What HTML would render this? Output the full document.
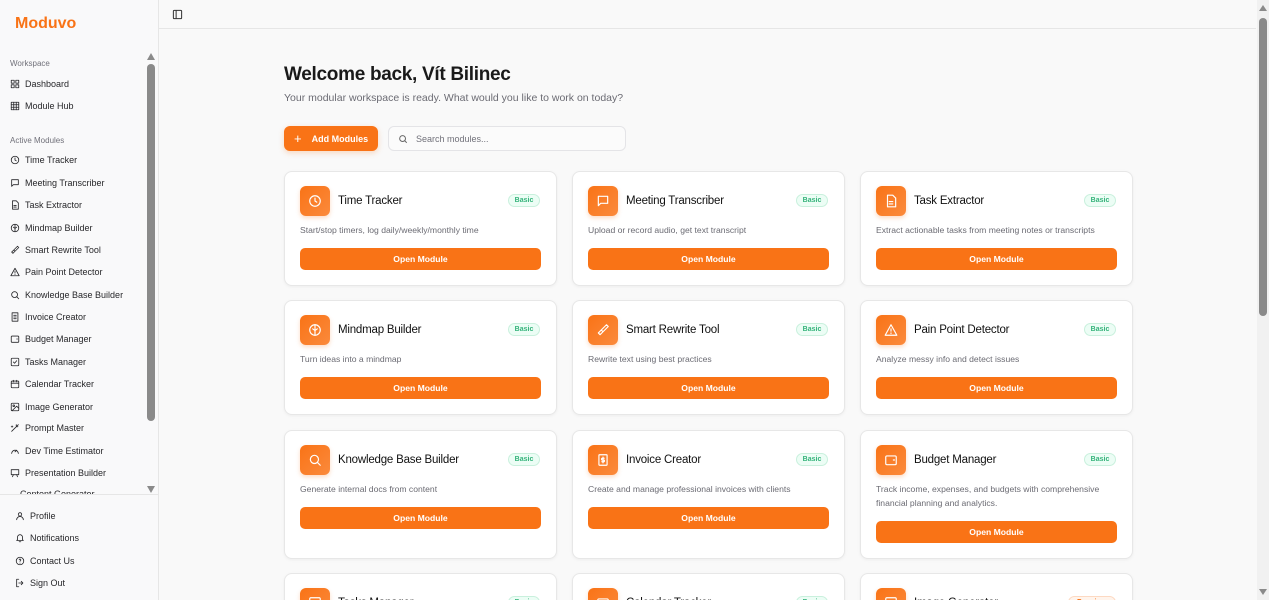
<!DOCTYPE html>
<html><head><meta charset="utf-8"><style>
*{box-sizing:border-box;margin:0;padding:0}
html{width:1269px;height:600px;overflow:hidden}
body{width:1269px;height:600px;overflow:hidden;background:#f9f9f9;font-family:"Liberation Sans",sans-serif;color:#1a1a1a;position:relative}
.sb{position:absolute;left:0;top:0;width:159px;height:600px;background:#f9f9fa;border-right:1px solid #e6e6e6}
.logo{position:absolute;left:15px;top:15px;color:#f97316;font-size:16px;font-weight:600}
.lbl{position:absolute;left:10px;font-size:8px;color:#71717a}
.it{position:absolute;left:10px;font-size:9px;color:#27272a;display:flex;align-items:center;gap:5px;height:12px}
.it svg{width:10px;height:10px;stroke:#27272a;fill:none;stroke-width:2;stroke-linecap:round;stroke-linejoin:round}
.sbs{position:absolute;left:147px;top:64px;width:8px;height:357px;background:#8a8a8a;border-radius:4px}
.tri{position:absolute;left:147px;width:0;height:0;border-left:4px solid transparent;border-right:4px solid transparent}
.bot{position:absolute;left:0;top:494px;width:158px;height:106px;border-top:1px solid #e6e6e6;background:#f9f9fa}
.top{position:absolute;left:159px;top:0;width:1097px;height:29px;border-bottom:1px solid #e6e6e6}
.msb{position:absolute;left:1257px;top:0;width:12px;height:600px;background:#f1f1f1}
h1{position:absolute;left:284px;top:64px;font-size:19px;font-weight:700;letter-spacing:-.3px}
.sub{position:absolute;left:284px;top:92px;font-size:10.5px;color:#6b6b73}
.add{position:absolute;left:284px;top:126px;width:94px;height:25px;background:#f97316;border-radius:6px;color:#fff;font-size:9px;font-weight:700;display:flex;align-items:center;gap:10px;padding-left:10px;box-shadow:0 2px 6px rgba(249,115,22,.25)}
.srch{position:absolute;left:388px;top:126px;width:238px;height:25px;border:1px solid #e4e4e7;border-radius:6px;background:#fbfbfb;font-size:9px;color:#71717a;display:flex;align-items:center;gap:8px;padding-left:9px}
.card{position:absolute;width:273px;height:115px;background:#fff;border:1px solid #e7e7e7;border-radius:8px;box-shadow:0 1px 3px rgba(0,0,0,.05)}
.ic{position:absolute;left:15px;top:14px;width:30px;height:30px;border-radius:6px;background:linear-gradient(135deg,#f97316,#fb8a3c);display:flex;align-items:center;justify-content:center;box-shadow:0 2px 4px rgba(249,115,22,.25)}
.ic svg{width:14px;height:14px;stroke:#fff;fill:none;stroke-width:2;stroke-linecap:round;stroke-linejoin:round}
.t{position:absolute;left:53px;top:23px;font-size:11.5px;color:#111;letter-spacing:-.2px}
.b{position:absolute;right:16px;top:22px;height:13px;width:32px;border-radius:7px;background:#ecfdf5;border:1px solid #c9f0dd;color:#34b37a;font-size:7px;font-weight:700;display:flex;align-items:center;justify-content:center}
.d{position:absolute;left:15px;top:51px;font-size:8.6px;color:#6b6b73;line-height:14px;width:245px}
.o{position:absolute;left:15px;right:15px;top:76px;height:22px;background:#f97316;border-radius:5px;color:#fff;font-size:8.6px;font-weight:700;display:flex;align-items:center;justify-content:center}
</style></head><body>
<div class="sb">
<div class="logo">Moduvo</div>
<div class="lbl" style="top:59px">Workspace</div>
<div class="it" style="top:78px"><svg viewBox="0 0 24 24"><rect x="3" y="3" width="7" height="7"/><rect x="14" y="3" width="7" height="7"/><rect x="3" y="14" width="7" height="7"/><rect x="14" y="14" width="7" height="7"/></svg>Dashboard</div>
<div class="it" style="top:100px"><svg viewBox="0 0 24 24"><rect x="3" y="3" width="18" height="18"/><path d="M3 9h18M3 15h18M9 3v18M15 3v18"/></svg>Module Hub</div>
<div class="lbl" style="top:136px">Active Modules</div>
<div class="it" style="top:154px"><svg viewBox="0 0 24 24"><circle cx="12" cy="12" r="9"/><path d="M12 7v5l3 2"/></svg>Time Tracker</div>
<div class="it" style="top:177px"><svg viewBox="0 0 24 24"><path d="M4 4h16v12H8l-4 4z"/></svg>Meeting Transcriber</div>
<div class="it" style="top:199px"><svg viewBox="0 0 24 24"><path d="M6 2h9l5 5v15H6z"/><path d="M9 13h6M9 17h6"/></svg>Task Extractor</div>
<div class="it" style="top:222px"><svg viewBox="0 0 24 24"><circle cx="12" cy="12" r="9"/><path d="M12 3v18M8 10l4 3 4-3"/></svg>Mindmap Builder</div>
<div class="it" style="top:244px"><svg viewBox="0 0 24 24"><path d="M18 3l3 3-9 9-3-3zM9 12l-5 5 3 3 5-5"/></svg>Smart Rewrite Tool</div>
<div class="it" style="top:266px"><svg viewBox="0 0 24 24"><path d="M12 3l10 18H2z"/><path d="M12 10v4M12 17v1"/></svg>Pain Point Detector</div>
<div class="it" style="top:289px"><svg viewBox="0 0 24 24"><circle cx="11" cy="11" r="7"/><path d="M16 16l5 5"/></svg>Knowledge Base Builder</div>
<div class="it" style="top:311px"><svg viewBox="0 0 24 24"><rect x="5" y="2" width="14" height="20"/><path d="M9 8h6M9 12h6M9 16h6"/></svg>Invoice Creator</div>
<div class="it" style="top:333px"><svg viewBox="0 0 24 24"><rect x="3" y="5" width="18" height="15" rx="2"/><path d="M16 12h2"/></svg>Budget Manager</div>
<div class="it" style="top:356px"><svg viewBox="0 0 24 24"><rect x="3" y="3" width="18" height="18" rx="2"/><path d="M8 12l3 3 5-6"/></svg>Tasks Manager</div>
<div class="it" style="top:378px"><svg viewBox="0 0 24 24"><rect x="3" y="5" width="18" height="16" rx="2"/><path d="M3 10h18M8 3v4M16 3v4"/></svg>Calendar Tracker</div>
<div class="it" style="top:401px"><svg viewBox="0 0 24 24"><rect x="3" y="3" width="18" height="18" rx="2"/><circle cx="9" cy="9" r="2"/><path d="M21 15l-5-5L5 21"/></svg>Image Generator</div>
<div class="it" style="top:422px"><svg viewBox="0 0 24 24"><path d="M4 20L20 4M15 4v3M19 9h-3M5 10V7M3 9h4"/></svg>Prompt Master</div>
<div class="it" style="top:445px"><svg viewBox="0 0 24 24"><path d="M4 18a8 8 0 1 1 16 0"/><path d="M12 14l4-4"/></svg>Dev Time Estimator</div>
<div class="it" style="top:467px"><svg viewBox="0 0 24 24"><rect x="3" y="4" width="18" height="12"/><path d="M8 16l-2 5M16 16l2 5"/></svg>Presentation Builder</div>
<div class="it" style="top:489px;height:5px;overflow:hidden;align-items:flex-start">&nbsp;&nbsp;&nbsp;&nbsp;Content Generator</div>
<div class="tri" style="top:53px;border-bottom:7px solid #8a8a8a"></div>
<div class="sbs"></div>
<div class="tri" style="top:486px;border-top:7px solid #8a8a8a"></div>
<div class="bot">
<div class="it" style="left:15px;top:15px"><svg viewBox="0 0 24 24"><circle cx="12" cy="8" r="4"/><path d="M4 21a8 8 0 0 1 16 0"/></svg>Profile</div>
<div class="it" style="left:15px;top:37px"><svg viewBox="0 0 24 24"><path d="M6 16V10a6 6 0 0 1 12 0v6l2 2H4zM10 21h4"/></svg>Notifications</div>
<div class="it" style="left:15px;top:60px"><svg viewBox="0 0 24 24"><circle cx="12" cy="12" r="9"/><path d="M10 9a2 2 0 1 1 3 2c-1 .5-1 1-1 2M12 17v.5"/></svg>Contact Us</div>
<div class="it" style="left:15px;top:82px"><svg viewBox="0 0 24 24"><path d="M9 3H4v18h5M15 8l4 4-4 4M19 12H9"/></svg>Sign Out</div>
</div>
</div>
<div class="top"><svg style="position:absolute;left:13px;top:9px" width="11" height="11" viewBox="0 0 24 24" fill="none" stroke="#333" stroke-width="2.2"><rect x="3" y="3" width="18" height="18" rx="2"/><path d="M9 3v18"/></svg></div>
<div class="msb"><div style="position:absolute;left:2px;top:18px;width:8px;height:298px;background:#8a8a8a;border-radius:4px"></div><div style="position:absolute;left:2px;top:5px;border-left:4px solid transparent;border-right:4px solid transparent;border-bottom:6px solid #8a8a8a"></div><div style="position:absolute;left:2px;top:589px;border-left:4px solid transparent;border-right:4px solid transparent;border-top:6px solid #8a8a8a"></div></div>
<h1>Welcome back, Vít Bilinec</h1>
<div class="sub">Your modular workspace is ready. What would you like to work on today?</div>
<div class="add"><span style="font-size:13px;font-weight:400">+</span>Add Modules</div>
<div class="srch"><svg width="10" height="10" viewBox="0 0 24 24" fill="none" stroke="#666" stroke-width="2.4"><circle cx="11" cy="11" r="7"/><path d="M16 16l5 5"/></svg>Search modules...</div>

<div class="card" style="left:284px;top:171px"><div class="ic"><svg viewBox="0 0 24 24"><circle cx="12" cy="12" r="9"/><path d="M12 7v5l3 2"/></svg></div><div class="t">Time Tracker</div><div class="b">Basic</div><div class="d">Start/stop timers, log daily/weekly/monthly time</div><div class="o">Open Module</div></div>
<div class="card" style="left:572px;top:171px"><div class="ic"><svg viewBox="0 0 24 24"><path d="M4 4h16v12H8l-4 4z"/></svg></div><div class="t">Meeting Transcriber</div><div class="b">Basic</div><div class="d">Upload or record audio, get text transcript</div><div class="o">Open Module</div></div>
<div class="card" style="left:860px;top:171px"><div class="ic"><svg viewBox="0 0 24 24"><path d="M6 2h9l5 5v15H6z"/><path d="M9 13h6M9 17h6"/></svg></div><div class="t">Task Extractor</div><div class="b">Basic</div><div class="d">Extract actionable tasks from meeting notes or transcripts</div><div class="o">Open Module</div></div>

<div class="card" style="left:284px;top:300px"><div class="ic"><svg viewBox="0 0 24 24"><circle cx="12" cy="12" r="9"/><path d="M12 3v18M8 10l4 3 4-3"/></svg></div><div class="t">Mindmap Builder</div><div class="b">Basic</div><div class="d">Turn ideas into a mindmap</div><div class="o">Open Module</div></div>
<div class="card" style="left:572px;top:300px"><div class="ic"><svg viewBox="0 0 24 24"><path d="M18 3l3 3-9 9-3-3zM9 12l-5 5 3 3 5-5"/></svg></div><div class="t">Smart Rewrite Tool</div><div class="b">Basic</div><div class="d">Rewrite text using best practices</div><div class="o">Open Module</div></div>
<div class="card" style="left:860px;top:300px"><div class="ic"><svg viewBox="0 0 24 24"><path d="M12 3l10 18H2z"/><path d="M12 10v4M12 17v1"/></svg></div><div class="t">Pain Point Detector</div><div class="b">Basic</div><div class="d">Analyze messy info and detect issues</div><div class="o">Open Module</div></div>

<div class="card" style="left:284px;top:430px;height:129px"><div class="ic"><svg viewBox="0 0 24 24"><circle cx="11" cy="11" r="7"/><path d="M16 16l5 5"/></svg></div><div class="t">Knowledge Base Builder</div><div class="b">Basic</div><div class="d">Generate internal docs from content</div><div class="o">Open Module</div></div>
<div class="card" style="left:572px;top:430px;height:129px"><div class="ic"><svg viewBox="0 0 24 24"><rect x="5" y="3" width="14" height="18" rx="1"/><path d="M12 7v10M14 9h-3a1.5 1.5 0 0 0 0 3h2a1.5 1.5 0 0 1 0 3h-3"/></svg></div><div class="t">Invoice Creator</div><div class="b">Basic</div><div class="d">Create and manage professional invoices with clients</div><div class="o">Open Module</div></div>
<div class="card" style="left:860px;top:430px;height:129px"><div class="ic"><svg viewBox="0 0 24 24"><rect x="3" y="5" width="18" height="15" rx="2"/><path d="M16 12h2"/></svg></div><div class="t">Budget Manager</div><div class="b">Basic</div><div class="d">Track income, expenses, and budgets with comprehensive financial planning and analytics.</div><div class="o" style="top:90px">Open Module</div></div>

<div class="card" style="left:284px;top:573px"><div class="ic"><svg viewBox="0 0 24 24"><rect x="3" y="3" width="18" height="18" rx="2"/></svg></div><div class="t">Tasks Manager</div><div class="b">Basic</div></div>
<div class="card" style="left:572px;top:573px"><div class="ic"><svg viewBox="0 0 24 24"><rect x="3" y="5" width="18" height="16" rx="2"/></svg></div><div class="t">Calendar Tracker</div><div class="b">Basic</div></div>
<div class="card" style="left:860px;top:573px"><div class="ic"><svg viewBox="0 0 24 24"><rect x="3" y="3" width="18" height="18" rx="2"/></svg></div><div class="t">Image Generator</div><div class="b" style="background:#fff4ec;border-color:#fdd9c2;color:#f97316;width:48px">Premium</div></div>
</body></html>
